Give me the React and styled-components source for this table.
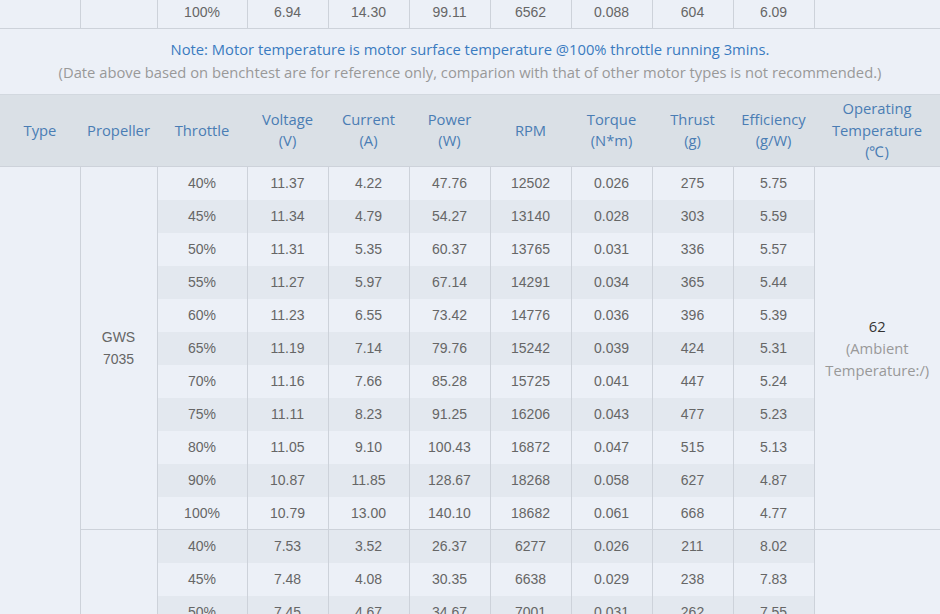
import React from 'react';
import styled, { createGlobalStyle } from 'styled-components';

const GlobalStyle = createGlobalStyle`
  html, body {
    margin: 0;
    padding: 0;
    overflow: hidden;
    background: #ecf0f7;
  }
`;

const Page = styled.div`
  width: 940px;
  margin-top: -5px;
  background: #ecf0f7;
`;

const Table = styled.table`
  width: 940px;
  table-layout: fixed;
  border-collapse: collapse;
  font-family: "Liberation Sans", Arial, sans-serif;
  font-size: 14px;
  color: #666;
`;

const Cell = styled.td`
  height: ${({ $short }) => ($short ? '32px' : '33px')};
  padding: 0 4px;
  text-align: center;
  vertical-align: middle;
  line-height: 22px;
  background: ${({ $striped }) => ($striped ? '#e3e8ef' : '#ecf0f7')};
  border-left: ${({ $first }) => ($first ? 'none' : '1px solid #cdd2da')};
  border-bottom: ${({ $last }) => ($last ? '1px solid #cdd2da' : 'none')};
`;

const HeadCell = styled.th`
  font-family: "Open Sans", sans-serif;
  font-weight: normal;
  font-size: 14.75px;
  color: #4a7db4;
  background: #dae0e6;
  padding: 3px 1px 3px;
  line-height: 21.5px;
  text-align: center;
  vertical-align: middle;
  border-top: 1px solid #d2d8df;
  border-bottom: 1px solid #cdd2da;
`;

const Note = styled.div`
  padding: 9px 0 10px;
  text-align: center;
  font-family: "Open Sans", sans-serif;
  font-size: 14.75px;
  line-height: 23px;
`;

const NoteMain = styled.div`
  color: #3a7bc0;
`;

const NoteSub = styled.div`
  color: #999;
`;

const TempValue = styled.div`
  font-family: "Open Sans", sans-serif;
  font-size: 14.75px;
  color: #333;
`;

const TempNote = styled.div`
  font-family: "Open Sans", sans-serif;
  font-size: 14.75px;
  color: #999;
`;

const widths = [80, 77, 90, 81, 81, 81, 81, 81, 81, 81, 126];

const Cols = () => (
  <colgroup>
    {widths.map((w, i) => (
      <col key={i} style={{ width: w }} />
    ))}
  </colgroup>
);

const headers = [
  ['Type'],
  ['Propeller'],
  ['Throttle'],
  ['Voltage', '(V)'],
  ['Current', '(A)'],
  ['Power', '(W)'],
  ['RPM'],
  ['Torque', '(N*m)'],
  ['Thrust', '(g)'],
  ['Efficiency', '(g/W)'],
  ['Operating', 'Temperature', '(℃)'],
];

const groupOne = [
  ['40%', '11.37', '4.22', '47.76', '12502', '0.026', '275', '5.75'],
  ['45%', '11.34', '4.79', '54.27', '13140', '0.028', '303', '5.59'],
  ['50%', '11.31', '5.35', '60.37', '13765', '0.031', '336', '5.57'],
  ['55%', '11.27', '5.97', '67.14', '14291', '0.034', '365', '5.44'],
  ['60%', '11.23', '6.55', '73.42', '14776', '0.036', '396', '5.39'],
  ['65%', '11.19', '7.14', '79.76', '15242', '0.039', '424', '5.31'],
  ['70%', '11.16', '7.66', '85.28', '15725', '0.041', '447', '5.24'],
  ['75%', '11.11', '8.23', '91.25', '16206', '0.043', '477', '5.23'],
  ['80%', '11.05', '9.10', '100.43', '16872', '0.047', '515', '5.13'],
  ['90%', '10.87', '11.85', '128.67', '18268', '0.058', '627', '4.87'],
  ['100%', '10.79', '13.00', '140.10', '18682', '0.061', '668', '4.77'],
];

const groupTwo = [
  ['40%', '7.53', '3.52', '26.37', '6277', '0.026', '211', '8.02'],
  ['45%', '7.48', '4.08', '30.35', '6638', '0.029', '238', '7.83'],
  ['50%', '7.45', '4.67', '34.67', '7001', '0.031', '262', '7.55'],
];

const previousRow = ['100%', '6.94', '14.30', '99.11', '6562', '0.088', '604', '6.09'];

const DataCells = ({ row, striped, last, short }) =>
  row.map((v, i) => (
    <Cell key={i} $striped={striped} $last={last} $short={short}>
      {v}
    </Cell>
  ));

const App = () => {
  const total = groupOne.length + groupTwo.length;

  return (
    <Page>
      <GlobalStyle />
      <Table>
        <Cols />
        <tbody>
          <tr>
            <Cell $first $last />
            <Cell $last />
            <DataCells row={previousRow} last />
            <Cell $last />
          </tr>
        </tbody>
      </Table>

      <Note>
        <NoteMain>Note: Motor temperature is motor surface temperature @100% throttle running 3mins.</NoteMain>
        <NoteSub>
          (Date above based on benchtest are for reference only, comparion with that of other motor types is not recommended.)
        </NoteSub>
      </Note>

      <Table>
        <Cols />
        <thead>
          <tr>
            {headers.map((lines, i) => (
              <HeadCell key={i}>
                {lines.map((l, j) => (
                  <div key={j}>{l}</div>
                ))}
              </HeadCell>
            ))}
          </tr>
        </thead>
        <tbody>
          {groupOne.map((row, i) => {
            const last = i === groupOne.length - 1;
            return (
              <tr key={`a${i}`}>
                {i === 0 && <Cell $first rowSpan={total} />}
                {i === 0 && (
                  <Cell rowSpan={groupOne.length} $last>
                    GWS
                    <br />
                    7035
                  </Cell>
                )}
                <DataCells row={row} striped={i % 2 === 1} last={last} short={last} />
                {i === 0 && (
                  <Cell rowSpan={groupOne.length} $last>
                    <TempValue>62</TempValue>
                    <TempNote>
                      (Ambient
                      <br />
                      Temperature:/)
                    </TempNote>
                  </Cell>
                )}
              </tr>
            );
          })}
          {groupTwo.map((row, i) => {
            const idx = groupOne.length + i;
            return (
              <tr key={`b${i}`}>
                {i === 0 && <Cell rowSpan={groupTwo.length} />}
                <DataCells row={row} striped={idx % 2 === 1} />
                {i === 0 && <Cell rowSpan={groupTwo.length} />}
              </tr>
            );
          })}
        </tbody>
      </Table>
    </Page>
  );
};

export default App;
